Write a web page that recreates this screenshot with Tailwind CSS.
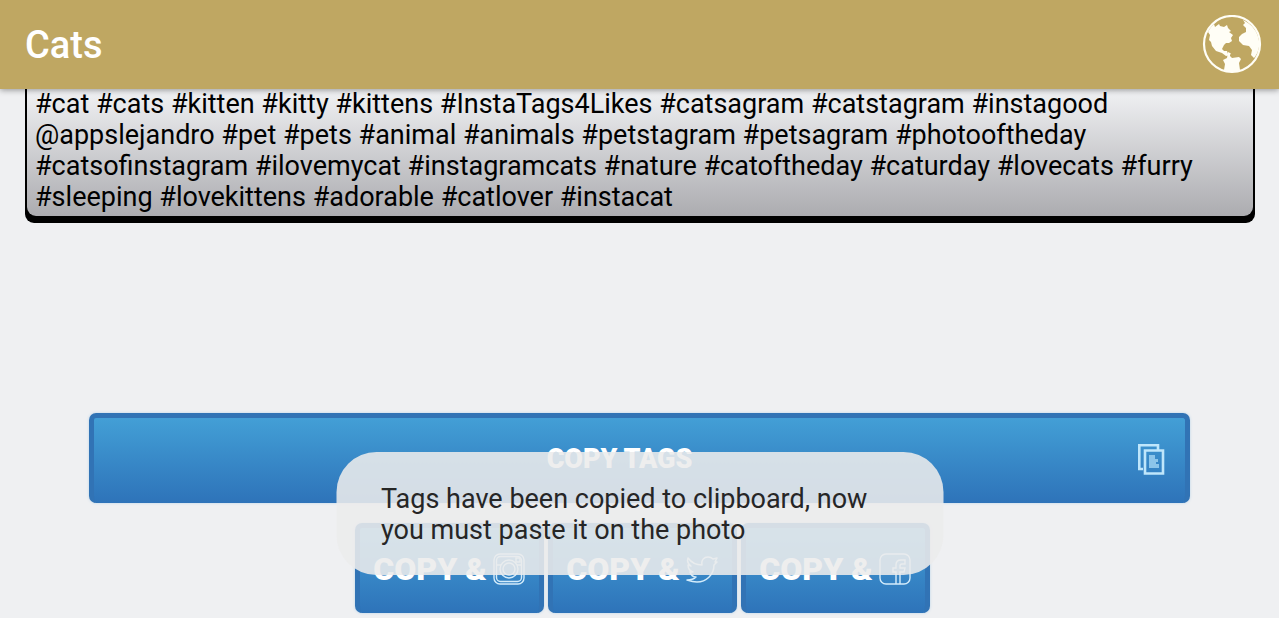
<!DOCTYPE html>
<html lang="en">

<head>
  <meta charset="UTF-8">
  <meta name="viewport" content="width=device-width, initial-scale=1.0">
  <title>Cats</title>
  <script src="https://cdn.jsdelivr.net/npm/@tailwindcss/browser@4"></script>
</head>

<body class="relative min-h-screen bg-[#eff0f2] font-[Roboto,sans-serif] text-black">
  <header class="relative z-10 flex h-[89px] items-center justify-between bg-[#bfa762] pl-[25px] pr-[17px] shadow-[0_1px_6px_rgba(0,0,0,0.4)]">
    <h1 class="text-[38px] leading-[44px] font-medium text-white">Cats</h1>
    <button type="button" aria-label="Language" class="size-[60px]">
      <svg viewBox="0 0 60 60" class="size-[60px]">
        <circle cx="30" cy="29" r="28" fill="none" stroke="#fffef6" stroke-width="2.2" />
        <path fill="#fffef6" d="M6 17C8 13 10 11 12 9L13 12L17 9L18 11L22 12L25 10L26 13L29 16L27 17L31 20L29 23L30 26L27 28L24 28L22 30L20 34L22 36L25 36L26 39L29 38L28 40L24 41L20 38L14 36L10 31L9 27L7 25L8 20Z" />
        <path fill="#fffef6" d="M41 5C50 9 56 17 57 26C58 33 55 40 52 43L49 40L50 35L47 31L41 30L37 26L37 22L40 19L44 17L44 13L41 10L43 8Z" />
        <path fill="#fffef6" d="M26 37L28 38L28 41L30 43L37 42L39 44L37 48L38 55C33 58 26 58 22 55L23 49L21 45L25 43Z" />
      </svg>
    </button>
  </header>

  <main>
    <p class="mr-6 ml-[25px] rounded-b-[9px] bg-black px-[2px] pb-[7px]">
      <span class="block rounded-b-[9px] bg-linear-to-b from-[#f1f2f4] to-[#acacb0] px-2 pb-[3px] text-[27px] leading-[31px]">#cat #cats #kitten #kitty #kittens #InstaTags4Likes #catsagram #catstagram #instagood<br>
        @appslejandro #pet #pets #animal #animals #petstagram #petsagram #photooftheday<br>
        #catsofinstagram #ilovemycat #instagramcats #nature #catoftheday #caturday #lovecats #furry<br>
        #sleeping #lovekittens #adorable #catlover #instacat</span>
    </p>

    <div class="mt-[190px] px-[89px]">
      <button type="button"
        class="flex h-[90px] w-full items-center rounded-[7px] border-[5px] border-b-0 border-[#3173b5] bg-linear-to-b from-[#439fd6] to-[#2e73b9] pr-5 pb-1 shadow-[0_0_3px_#b9d5ea]">
        <span class="flex-1 pl-2 text-[27px] leading-[30px] font-black text-white">COPY TAGS</span>
        <svg viewBox="0 0 28 32" class="h-8 w-7" fill="none" stroke="#bfe6fb" stroke-width="2.6">
          <path d="M6 26H2.3V2.3H21V7" />
          <path d="M8 7.5H26V30.5H8Z" />
          <path fill="#8cc5ea" stroke="none" d="M12 12H18V16H21V19H19V21H22V25H12Z" />
        </svg>
      </button>
    </div>

    <div class="mt-5 flex justify-center gap-1 pb-[5px] pl-[5px]">
      <button type="button"
        class="flex h-[90px] w-[189px] items-center justify-center gap-[6px] rounded-[7px] border-[5px] border-b-0 border-[#3173b5] bg-linear-to-b from-[#439fd6] to-[#2e73b9] pb-1 shadow-[0_0_3px_#b9d5ea]">
        <span class="text-[32px] leading-[38px] font-black whitespace-nowrap text-white">COPY &amp;</span>
        <svg viewBox="0 0 32 32" class="size-8 shrink-0" fill="none" stroke="#d3ecfb" stroke-width="1.4">
          <rect x="1" y="1" width="30" height="30" rx="6" />
          <rect x="3.5" y="3.5" width="25" height="25" rx="4" />
          <circle cx="16" cy="16" r="9" />
          <circle cx="16" cy="16" r="6" />
          <rect x="23" y="5" width="4" height="4" />
          <path d="M3 12H8M24 12H29" />
        </svg>
      </button>
      <button type="button"
        class="flex h-[90px] w-[189px] items-center justify-center gap-[6px] rounded-[7px] border-[5px] border-b-0 border-[#3173b5] bg-linear-to-b from-[#439fd6] to-[#2e73b9] pb-1 shadow-[0_0_3px_#b9d5ea]">
        <span class="text-[32px] leading-[38px] font-black whitespace-nowrap text-white">COPY &amp;</span>
        <svg viewBox="0 0 32 32" class="size-8 shrink-0" fill="none" stroke="#d3ecfb" stroke-width="1.5" stroke-linejoin="round">
          <path d="M2 5C5 9 10 12 16 12C15 7 18 4 22 4C24 4 26 5 27 6L31 5L29 9L31 9L28 12C28 22 20 29 11 29C7 29 4 28 1 27C5 27 8 26 10 24C7 24 5 22 4 19H7C4 18 2 15 2 12L5 13C2 11 1 8 2 5Z" />
        </svg>
      </button>
      <button type="button"
        class="flex h-[90px] w-[189px] items-center justify-center gap-[6px] rounded-[7px] border-[5px] border-b-0 border-[#3173b5] bg-linear-to-b from-[#439fd6] to-[#2e73b9] pb-1 shadow-[0_0_3px_#b9d5ea]">
        <span class="text-[32px] leading-[38px] font-black whitespace-nowrap text-white">COPY &amp;</span>
        <svg viewBox="0 0 32 32" class="size-8 shrink-0" fill="none" stroke="#d3ecfb" stroke-width="1.4">
          <rect x="1" y="1" width="30" height="30" rx="6" />
          <path d="M17 31V19H14V15H17V12C17 9 19 7 22 7H26V11H23C22 11 21 12 21 13V15H26L25 19H21V31" />
        </svg>
      </button>
    </div>
  </main>

  <!-- toast -->
  <div role="status"
    class="absolute bottom-[43px] left-1/2 z-20 w-[607px] -translate-x-1/2 rounded-[40px] bg-[#ececec]/88 px-[45px] pt-[32px] pb-[29px] text-[27px] leading-[31px] text-[#262626]">
    Tags have been copied to clipboard, now<br>
    you must paste it on the photo
  </div>
</body>

</html>
